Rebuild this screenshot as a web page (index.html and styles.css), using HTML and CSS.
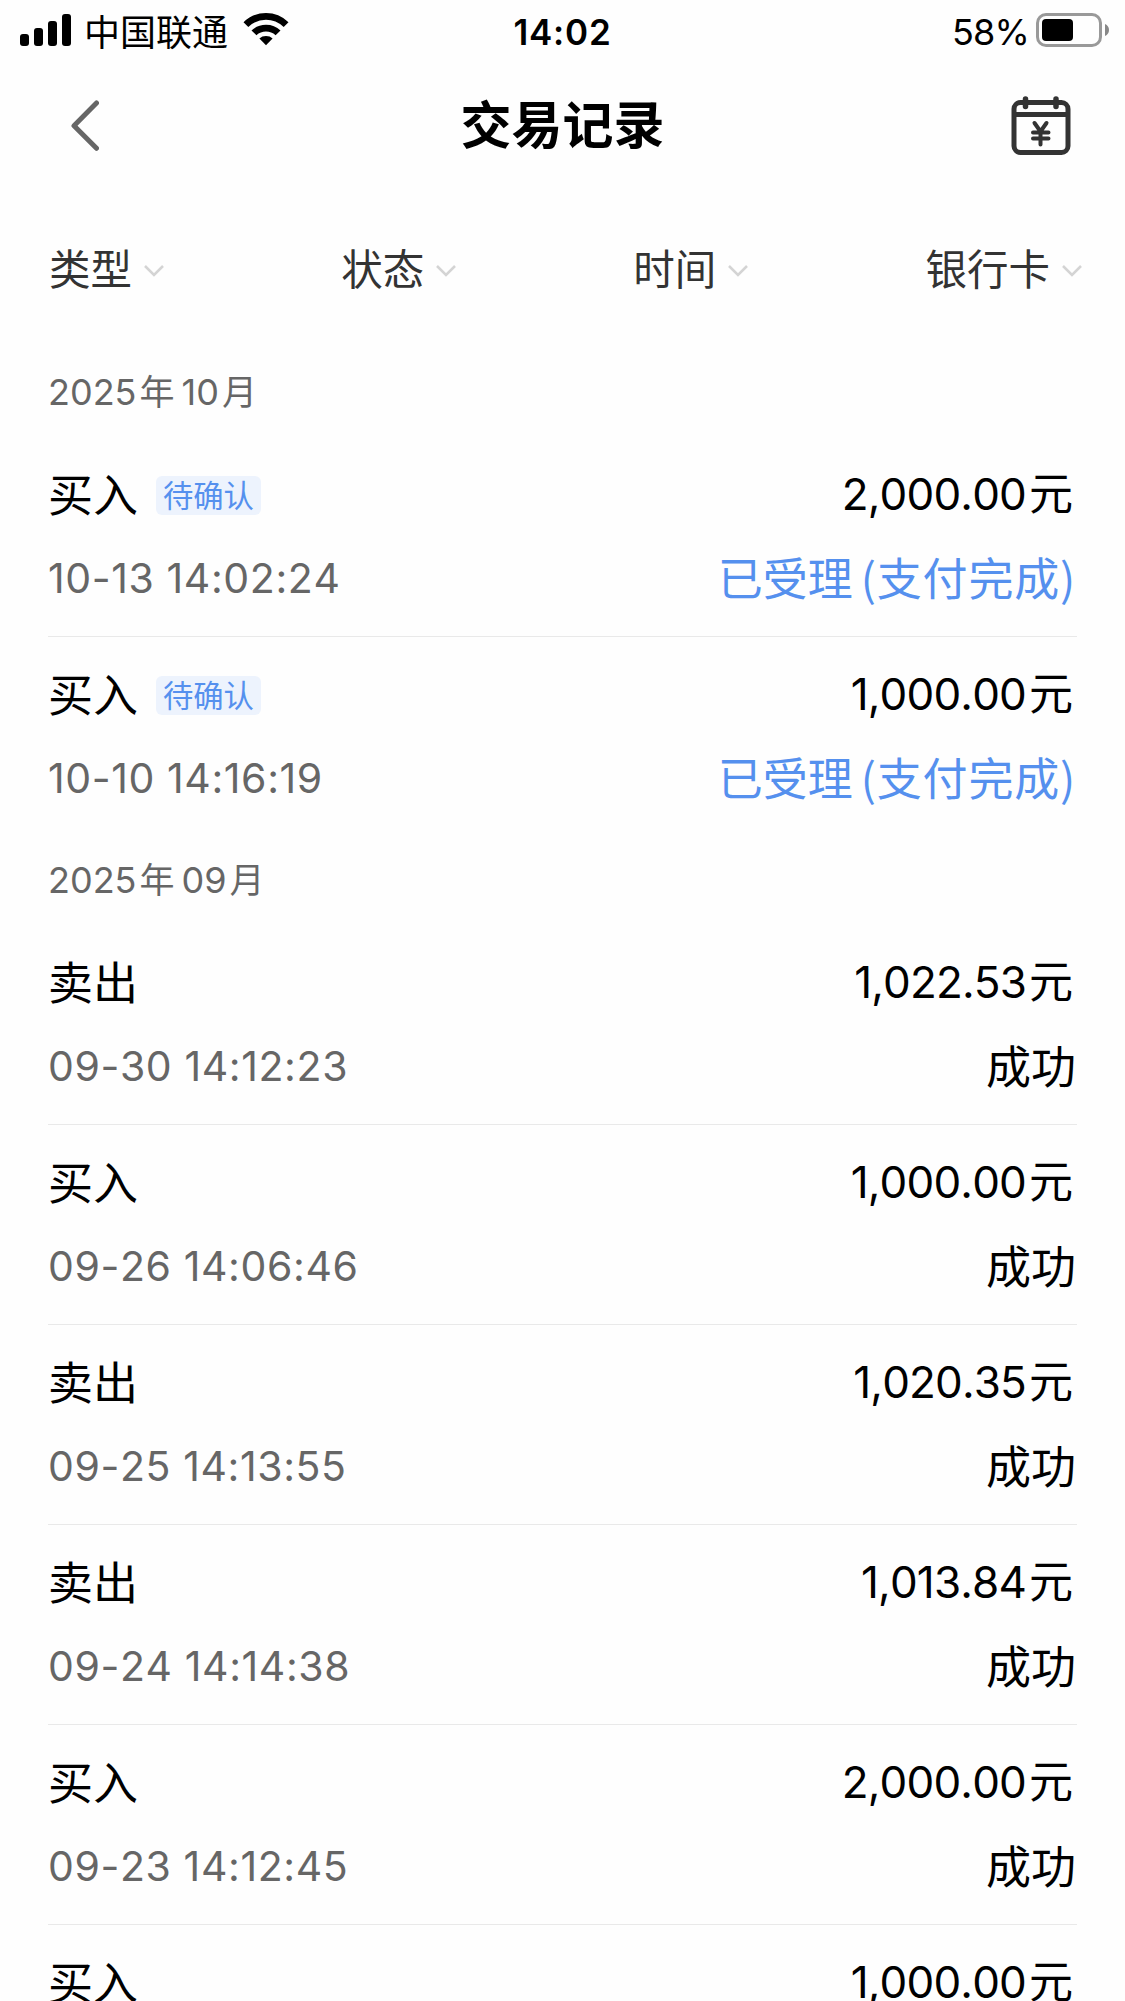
FILE: index.html
```html
<!DOCTYPE html>
<html lang="zh-CN">
<head>
<meta charset="utf-8">
<title>交易记录</title>
<link rel="stylesheet" href="styles.css">
</head>
<body>
<div class="status">
  <div class="status-left">
    <svg class="signal" width="52" height="32" viewBox="0 0 52 32"><rect x="0" y="20" width="9" height="12" rx="3"/><rect x="14" y="14" width="9" height="18" rx="3"/><rect x="28" y="7" width="9" height="25" rx="3"/><rect x="42" y="0" width="9" height="32" rx="3"/></svg>
    <span class="carrier">中国联通</span>
    <svg class="wifi" width="46" height="34" viewBox="0 0 46 34"><path d="M0.5 10.2Q10 1 23 1T45.5 10.2L40.7 15Q33 7.800 23 7.800T5.300 15Z"/><path d="M8.500 18.400Q14.500 12.800 23 12.800T37.500 18.400L32.600 23.200Q28.500 19.600 23 19.600T13.400 23.200Z"/><path d="M16.400 26.400Q19 24 23 24T29.600 26.400L23 33.300Z"/></svg>
  </div>
  <span class="clock">14:02</span>
  <div class="status-right">
    <span class="percent">58%</span>
    <svg class="battery" width="74" height="34" viewBox="0 0 74 34"><rect x="1.500" y="1.500" width="63" height="31" rx="8.500" fill="none" stroke="#999" stroke-width="3"/><rect x="6" y="6" width="31" height="22" rx="4"/><path d="M69 11Q73 12.800 73 17T69 23Z" fill="#888"/></svg>
  </div>
</div>
<header class="nav">
  <svg class="back" width="28" height="52" viewBox="0 0 28 52"><path d="M25.500 3L3 25.700L25.500 48.300" fill="none" stroke="#666" stroke-width="5" stroke-linecap="round" stroke-linejoin="round"/></svg>
  <h1 class="title">交易记录</h1>
  <svg class="calendar" width="60" height="60" viewBox="0 0 60 60" fill="none" stroke="#333" stroke-width="5" stroke-linecap="round"><rect x="3" y="6.500" width="54" height="50" rx="6.500"/><path d="M3 18.500H57" stroke-linecap="butt"/><path d="M14.500 3V10.500M45 3V10.500" stroke-width="5.500"/><path d="M23.500 27L29.500 35.500L35.500 27M22 36.500H37.500M22 42.500H37.500M29.500 35V48.500" stroke-width="4"/></svg>
</header>
<nav class="filters">
  <button class="filter"><span class="label">类型</span><svg class="arrow" viewBox="0 0 22 14"><path d="M2 2L11 11L20 2"/></svg></button>
  <button class="filter"><span class="label">状态</span><svg class="arrow" viewBox="0 0 22 14"><path d="M2 2L11 11L20 2"/></svg></button>
  <button class="filter"><span class="label">时间</span><svg class="arrow" viewBox="0 0 22 14"><path d="M2 2L11 11L20 2"/></svg></button>
  <button class="filter"><span class="label">银行卡</span><svg class="arrow" viewBox="0 0 22 14"><path d="M2 2L11 11L20 2"/></svg></button>
</nav>
<main class="records">
  <section>
    <h2 class="month">2025<span class="unit">年</span>10<span class="unit last">月</span></h2>
    <ul class="list">
      <li class="row"><div class="line"><span class="kind">买入</span><span class="tag">待确认</span><span class="amount">2,000.00<span class="yuan">元</span></span></div><div class="line"><time class="date">10-13 14:02:24</time><span class="state pending">已受理<span class="detail">(支付完成)</span></span></div></li>
      <li class="row"><div class="line"><span class="kind">买入</span><span class="tag">待确认</span><span class="amount">1,000.00<span class="yuan">元</span></span></div><div class="line"><time class="date">10-10 14:16:19</time><span class="state pending">已受理<span class="detail">(支付完成)</span></span></div></li>
    </ul>
  </section>
  <section>
    <h2 class="month">2025<span class="unit">年</span>09<span class="unit last">月</span></h2>
    <ul class="list">
      <li class="row"><div class="line"><span class="kind">卖出</span><span class="amount">1,022.53<span class="yuan">元</span></span></div><div class="line"><time class="date">09-30 14:12:23</time><span class="state">成功</span></div></li>
      <li class="row"><div class="line"><span class="kind">买入</span><span class="amount">1,000.00<span class="yuan">元</span></span></div><div class="line"><time class="date">09-26 14:06:46</time><span class="state">成功</span></div></li>
      <li class="row"><div class="line"><span class="kind">卖出</span><span class="amount">1,020.35<span class="yuan">元</span></span></div><div class="line"><time class="date">09-25 14:13:55</time><span class="state">成功</span></div></li>
      <li class="row"><div class="line"><span class="kind">卖出</span><span class="amount">1,013.84<span class="yuan">元</span></span></div><div class="line"><time class="date">09-24 14:14:38</time><span class="state">成功</span></div></li>
      <li class="row"><div class="line"><span class="kind">买入</span><span class="amount">2,000.00<span class="yuan">元</span></span></div><div class="line"><time class="date">09-23 14:12:45</time><span class="state">成功</span></div></li>
      <li class="row"><div class="line"><span class="kind">买入</span><span class="amount">1,000.00<span class="yuan">元</span></span></div></li>
    </ul>
  </section>
</main>
</body>
</html>
```
FILE: styles.css
```css
* { box-sizing: border-box; margin: 0; padding: 0; }
html, body { height: 2001px; overflow: hidden; }
body {
  width: 1125px;
  background: #fefefe;
  color: #000;
  font-family: Inter, "Noto Sans CJK SC", sans-serif;
}
svg { display: block; flex: none; }

.status {
  display: grid;
  grid-template-columns: 1fr auto 1fr;
  height: 60px;
  padding: 0 15px 0 20px;
  line-height: 60px;
}
.status-left, .status-right { display: flex; align-items: flex-start; }
.status-right { justify-content: flex-end; }
.signal { margin-top: 14px; }
.carrier { margin-left: 12px; font-size: 36px; line-height: 60px; font-family: "Noto Sans CJK SC", sans-serif; }
.wifi { margin: 12px 0 0 15px; }
.clock { font-size: 35px; font-weight: 600; letter-spacing: .8px; padding: 2px 5px 0 0; }
.percent { font-size: 36px; letter-spacing: -.8px; padding-top: 2px; }
.battery { margin: 13px 0 0 7px; }

.nav {
  display: grid;
  grid-template-columns: 60px 1fr 60px;
  align-items: center;
  height: 132px;
  padding: 0 54px 0 71px;
}
.title {
  font: 600 51px/125px "Noto Sans CJK SC", sans-serif;
  height: 132px;
  text-align: center;
  padding-right: 17px;
}

.filters {
  display: flex;
  justify-content: space-between;
  height: 156px;
  padding: 0 42px 0 49px;
}
.filter {
  display: flex;
  align-items: center;
  height: 156px;
  border: 0;
  background: none;
  color: #333;
  font: 41.5px "Noto Sans CJK SC", sans-serif;
}
.label { height: 156px; line-height: 151px; }
.arrow { width: 22px; height: 14px; margin: 2px 0 0 11px; fill: none; stroke: #d4d4d4; stroke-width: 2.5; }

.records { padding: 0 48px; }
.month {
  height: 89px;
  font-size: 36px;
  font-weight: 400;
  line-height: 89px;
  color: #666;
}
.unit { font-size: 35px; margin: 0 7px 0 3px; }
.last { margin-right: 0; }
.list { list-style: none; }
.row { height: 200px; padding-top: 15px; border-bottom: 1px solid #e9e9e9; }
.row:last-child { height: 199px; border: 0; }
section:last-child .row:last-child { height: 76px; overflow: hidden; }
.line { display: flex; height: 84px; line-height: 84px; }
.kind { font-family: "Noto Sans CJK SC", sans-serif; font-size: 45px; line-height: 81px; }
.tag {
  height: 39px;
  margin: 24px 0 0 18px;
  padding: 0 7px;
  border-radius: 6px;
  background: #edf3fd;
  color: #5590ee;
  font: 30.3px/37px "Noto Sans CJK SC", sans-serif;
}
.amount { margin-left: auto; font-size: 44px; letter-spacing: -.85px; padding-right: 4px; font-kerning: none; }
.yuan { margin-left: 3px; letter-spacing: 0; }
.date { font-size: 41px; letter-spacing: .6px; color: #666; font-kerning: none; }
.state { margin-left: auto; padding-right: 1px; font-size: 45px; line-height: 82px; font-family: "Noto Sans CJK SC", sans-serif; }
.pending { color: #5590ee; }
.detail { margin-left: 8px; letter-spacing: .8px; }
```
